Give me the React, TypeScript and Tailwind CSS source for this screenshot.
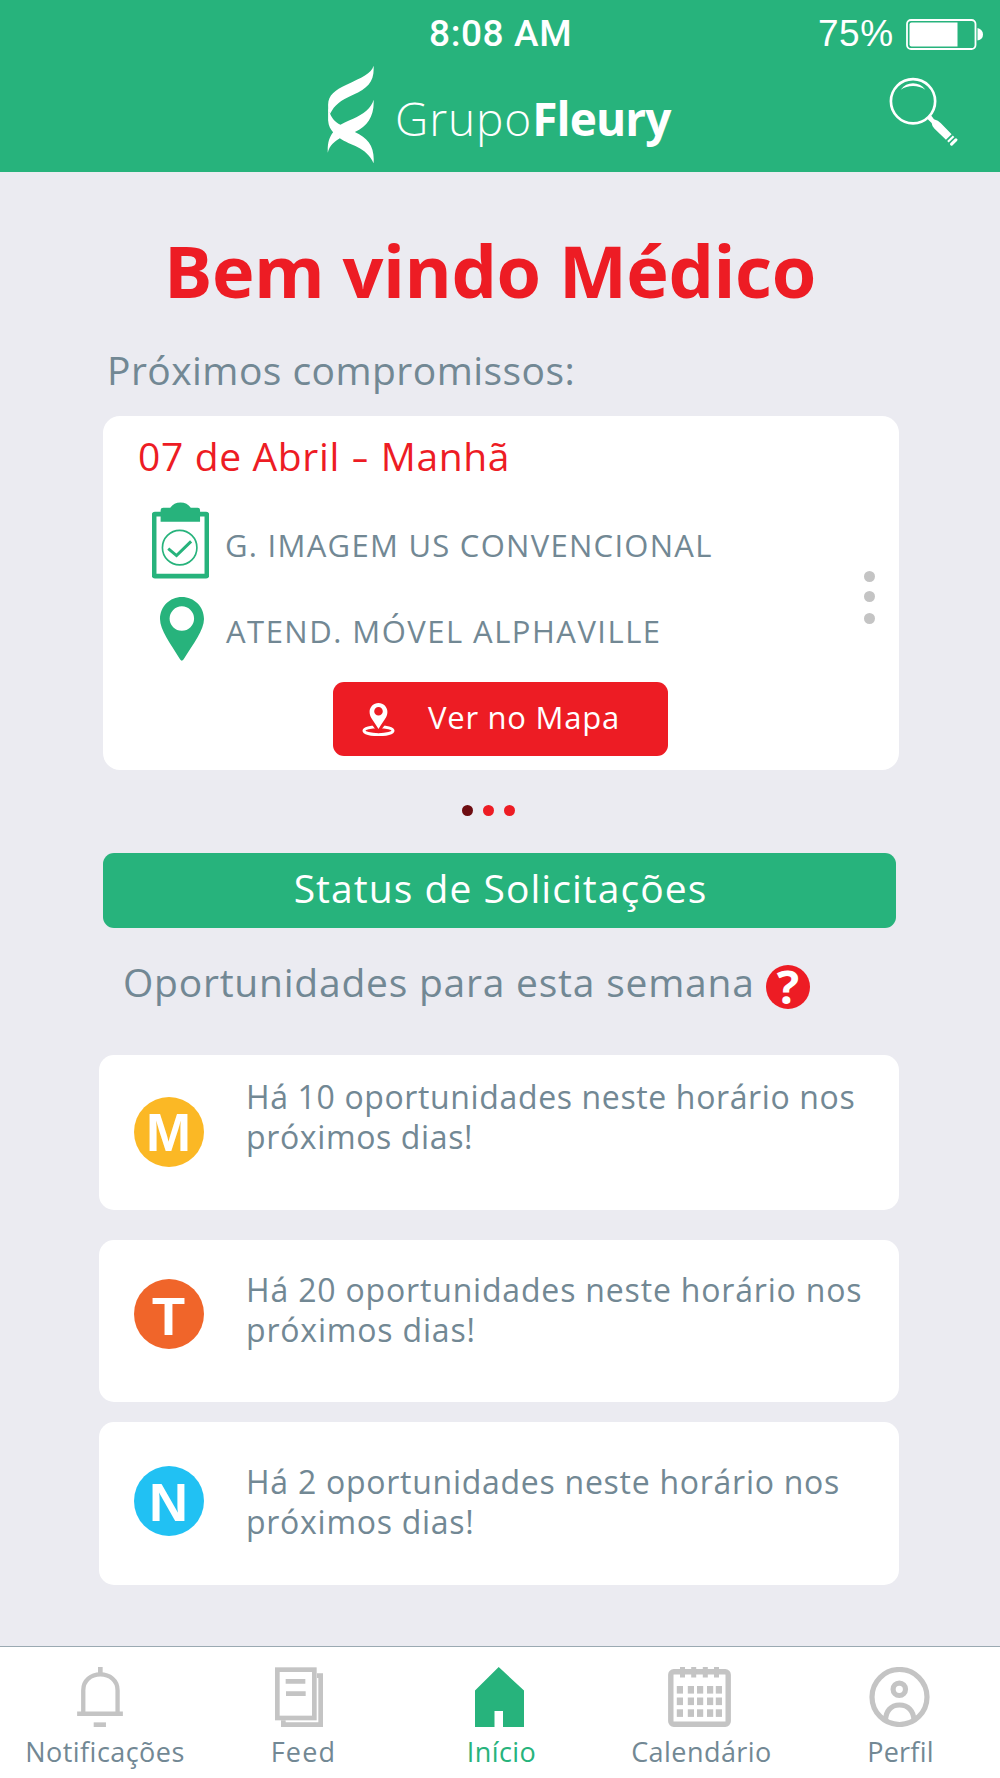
//Icons
const LogoMark = () => (
  <svg viewBox="0 0 140 296" className="h-[99px] w-[47px] fill-white">
    <path d="M139 2C142 49 123 69 78 89C38 107 23 119 9 146C4 139 3 129 3 119C4 89 23 76 58 59C103 37 133 26 139 2Z" />
    <path d="M139 104C133 129 108 147 78 161C63 168 51 172 40 179C23 171 15 160 9 146L3 125V165C4 182 11 193 18 201C6 216 1 234 2 262C8 239 23 229 38 219C68 241 118 244 139 294C143 244 123 219 83 200C123 184 142 149 139 104Z" />
  </svg>
)

const BatteryIcon = () => (
  <svg viewBox="0 0 78 31" className="h-[31px] w-[78px]">
    <rect x="1" y="1" width="68.5" height="29" rx="4" fill="none" stroke="white" strokeWidth="1.8" />
    <path d="M5.5 3.5H51.5V27.5H5.5Q3.5 27.5 3.5 25.5V5.5Q3.5 3.5 5.5 3.5Z" fill="white" />
    <path d="M71.5 9Q77 10.5 77 15.5T71.5 21.500Z" fill="white" />
  </svg>
)

const SearchIcon = () => (
  <svg viewBox="0 0 207 209" className="h-[69.5px] w-[69px]">
    <circle cx="72" cy="73" r="66.500" fill="none" stroke="white" strokeWidth="8" />
    <path d="M35 38Q50 19 72 19T109 38Q92 27 72 27T35 38Z" fill="white" />
    <path d="M114 125L126 115L135 127Q148 131 155 138L188 172L171 189L136 155Q129 147 128 138Z" fill="white" />
    <path d="M177 195L194 178" stroke="white" strokeWidth="6.500" />
    <path d="M188 202L201 189" stroke="white" strokeWidth="9" strokeLinecap="round" />
  </svg>
)

const ClipboardIcon = () => (
  <svg viewBox="0 0 172 231" className="h-[77px] w-[57px]">
    <rect x="6.500" y="36" width="159" height="187" rx="2" fill="none" stroke="#27b37c" strokeWidth="14" />
    <path d="M26 59V24Q26 17 34 17H55Q66 1 86 1T117 17H138Q145 17 145 24V59Z" fill="#27b37c" />
    <circle cx="83.500" cy="137" r="52" fill="none" stroke="#27b37c" strokeWidth="5" />
    <path d="M49 140L74 161L118 118" fill="none" stroke="#27b37c" strokeWidth="9" />
  </svg>
)

const PinIcon = () => (
  <svg viewBox="0 0 133 193" className="h-[64px] w-[44px]">
    <path fillRule="evenodd" d="M66 0C103 0 133 29 133 66C133 100 101 140 71 189Q66 196 61 189C32 140 0 100 0 66C0 29 30 0 66 0ZM66 28A37 37 0 1 0 66 102A37 37 0 1 0 66 28Z" fill="#27b37c" />
  </svg>
)

const MapIcon = () => (
  <svg viewBox="0 0 100 100" className="h-[33px] w-[33px]">
    <ellipse cx="50" cy="84" rx="44" ry="12" fill="none" stroke="white" strokeWidth="9" />
    <path d="M33 64L50 86L67 64" fill="#ed1c24" stroke="#ed1c24" strokeWidth="7" />
    <path fillRule="evenodd" d="M50 0C65 0 77 12 77 27C77 45 64 53 50 79C36 53 23 45 23 27C23 12 35 0 50 0ZM50 12A13 13 0 1 0 50 38A13 13 0 1 0 50 12Z" fill="white" />
  </svg>
)

const BellIcon = () => (
  <svg viewBox="0 0 138 181" className="h-[60px] w-[46px]" fill="none" stroke="#c4c4c4">
    <path d="M18.500 136V70C18.500 40 42 22.500 70 22.500S122 40 122 70V136" strokeWidth="13" />
    <path d="M0 141H138" strokeWidth="14" />
    <path d="M50 174H87" strokeWidth="14" />
    <path d="M70 0V22" strokeWidth="14" />
  </svg>
)

const FeedIcon = () => (
  <svg viewBox="0 0 144 180" className="h-[60px] w-[48px]" fill="none" stroke="#c4c4c4" strokeWidth="14">
    <rect x="7" y="8" width="111" height="145" />
    <path d="M126 26H137V173H25V160M32 43H91M33 80H92" />
  </svg>
)

const HomeIcon = () => (
  <svg viewBox="0 0 49 60" className="h-[60px] w-[49px] fill-[#27b37c]">
    <path d="M23.700 0L49 23.500V60H28V44H19.500V60H0V23.500Z" />
  </svg>
)

const CalendarIcon = () => (
  <svg viewBox="0 0 63 60" className="h-[60px] w-[63px]" fill="#c4c4c4">
    <rect x="2.800" y="4.700" width="57.400" height="52.600" rx="3" fill="none" stroke="#c4c4c4" strokeWidth="5.400" />
    {[12, 23.200, 34.800, 46].map((x) => (
      <rect key={x} x={x} y="0" width="5" height="10.500" />
    ))}
    {[19, 30.500, 42.300].map((y) => [8.800, 19.800, 29, 39, 47.800].map((x) => <rect key={x + "-" + y} x={x} y={y} width="6.200" height="7.600" />))}
  </svg>
)

const ProfileIcon = () => (
  <svg viewBox="0 0 61 60" className="h-[60px] w-[61px]" fill="none" stroke="#c4c4c4" strokeWidth="5.200">
    <circle cx="30.500" cy="30" r="27.500" />
    <circle cx="30.300" cy="22.300" r="6.200" />
    <path d="M16.500 54C16.500 44 22 38 30.500 38S45 44 45 54" />
  </svg>
)

//Data
const opportunities = [
  { letter: "M", amount: 10, card: "h-[155px]", badge: "mt-[42px] pt-px bg-[#fbb825]", text: "mt-[22px] tracking-[0.63px]" },
  { letter: "T", amount: 20, card: "mt-[30px] h-[162px]", badge: "mt-[39px] pt-[3px] bg-[#f0652a]", text: "mt-[30px] tracking-[0.82px]" },
  { letter: "N", amount: 2, card: "mt-[20px] h-[163px]", badge: "mt-[44px] pt-[2px] bg-[#21c1f3]", text: "mt-[40px] tracking-[0.73px]" },
]

const tabs = [
  { label: "Notificações", icon: <BellIcon />, place: "w-[200px]", labelClass: "ml-[10px] tracking-[0.45px]" },
  { label: "Feed", icon: <FeedIcon />, place: "w-[198px]", labelClass: "ml-[9px] tracking-[1.2px]" },
  { label: "Início", icon: <HomeIcon />, place: "w-[203px]", labelClass: "ml-[4px] tracking-[0.4px] text-[#27b37c]" },
  { label: "Calendário", icon: <CalendarIcon />, place: "w-[197px]", labelClass: "ml-[4px] tracking-[0.45px]" },
  { label: "Perfil", icon: <ProfileIcon />, place: "w-[202px]", labelClass: "ml-[3px] tracking-[0.2px]" },
]

export default function App() {
  return (
    <div className="flex h-[1778px] w-[1000px] flex-col bg-[#ebebf1] font-['Open_Sans',sans-serif] text-[#728894]">
      <header className="h-[172px] bg-[#27b37c] text-white">
        <div className="flex h-[65px] pt-[12px] leading-[44px]">
          <span className="ml-[429px] w-[389px] font-['Roboto',sans-serif] text-[37px] font-medium tracking-[0.6px]">8:08 AM</span>
          <span className="w-[88px] font-['Liberation_Sans',sans-serif] text-[37px] tracking-[0.5px]">75%</span>
          <span className="pt-[7px]">
            <BatteryIcon />
          </span>
        </div>
        <div className="flex">
          <div className="ml-[327px] w-[68px]">
            <LogoMark />
          </div>
          <p className="w-[494px] pt-[23px] text-[46px] leading-[60px] font-light tracking-[0.9px] whitespace-nowrap">
            Grupo<b className="font-bold tracking-[-0.9px]">Fleury</b>
          </p>
          <button aria-label="Buscar" className="mt-[12px] h-[70px]">
            <SearchIcon />
          </button>
        </div>
      </header>

      <main className="flex-1">
        <h1 className="mt-[58px] pl-[164px] text-[72px] leading-[80px] font-bold tracking-[-0.45px] whitespace-nowrap text-[#ed1c24]">Bem vindo Médico</h1>
        <h2 className="mt-[36px] pl-[107px] text-[39px] leading-[48px] tracking-[0.45px]">Próximos compromissos:</h2>

        <section className="mt-[22px] ml-[103px] h-[354px] w-[796px] rounded-[17px] bg-white pt-[16px]">
          <h3 className="pl-[35px] text-[39px] leading-[48px] tracking-[0.65px] text-[#ed1c24]">
            07 de Abril <span className="inline-block scale-x-140 px-[3px]">-</span> Manhã
          </h3>
          <div className="mt-[21px] flex justify-between">
            <div className="text-[31px] leading-[40px] whitespace-nowrap">
              <div className="flex h-[78px] items-center pl-[49px]">
                <ClipboardIcon />
                <span className="ml-[16px] pt-[10px] tracking-[1.28px]">G. IMAGEM US CONVENCIONAL</span>
              </div>
              <div className="mt-[18px] flex h-[64px] items-center pl-[57px]">
                <PinIcon />
                <span className="ml-[22px] pt-[4px] tracking-[1.48px]">ATEND. MÓVEL ALPHAVILLE</span>
              </div>
            </div>
            <div className="mr-[24px] flex flex-col pt-[70px]">
              <i className="size-[11px] rounded-full bg-[#c4c4c4]" />
              <i className="mt-[9px] size-[11px] rounded-full bg-[#c4c4c4]" />
              <i className="mt-[11px] size-[11px] rounded-full bg-[#c4c4c4]" />
            </div>
          </div>
          <button className="mt-[21px] ml-[230px] flex h-[74px] w-[335px] items-center rounded-[11px] bg-[#ed1c24] pl-[29px] text-[31px] text-white">
            <MapIcon />
            <span className="ml-[33px] pb-[4px] tracking-[0.75px]">Ver no Mapa</span>
          </button>
        </section>

        <div className="mt-[35px] ml-[462px] flex gap-[10px]">
          <i className="size-[11px] rounded-full bg-[#6d0c11]" />
          <i className="size-[11px] rounded-full bg-[#ed1c24]" />
          <i className="size-[11px] rounded-full bg-[#ed1c24]" />
        </div>

        <button className="mt-[37px] ml-[103px] block h-[75px] w-[793px] rounded-[11px] bg-[#27b37c] pb-[5px] pl-[2px] text-[39px] tracking-[1.05px] text-white">Status de Solicitações</button>

        <div className="mt-[30px] flex h-[48px] pl-[123px]">
          <p className="w-[643px] text-[39px] leading-[48px] tracking-[0.77px] whitespace-nowrap">Oportunidades para esta semana</p>
          <span className="mt-[7px] size-[44px] rounded-full bg-[#ed1c24] text-center text-[47px] leading-[43px] font-bold text-white">?</span>
        </div>

        <div className="mt-[49px] ml-[99px] w-[800px]">
          {opportunities.map((item) => (
            <article key={item.letter} className={`flex rounded-[15px] bg-white ${item.card}`}>
              <span className={`ml-[35px] size-[70px] rounded-full pr-[1px] text-center font-['Liberation_Sans',sans-serif] text-[54px] leading-[69px] font-bold text-white ${item.badge}`}>{item.letter}</span>
              <p className={`ml-[42px] text-[32px] leading-[40px] whitespace-nowrap ${item.text}`}>
                Há {item.amount} oportunidades neste horário nos
                <br />
                próximos dias!
              </p>
            </article>
          ))}
        </div>
      </main>

      <nav className="flex h-[132px] border-t border-[#9aa9b2] bg-white">
        {tabs.map((tab) => (
          <a key={tab.label} className={`flex flex-col items-center pt-[20px] ${tab.place}`}>
            {tab.icon}
            <span className={`mt-[8px] text-[27px] leading-[34px] ${tab.labelClass}`}>{tab.label}</span>
          </a>
        ))}
      </nav>
    </div>
  )
}
